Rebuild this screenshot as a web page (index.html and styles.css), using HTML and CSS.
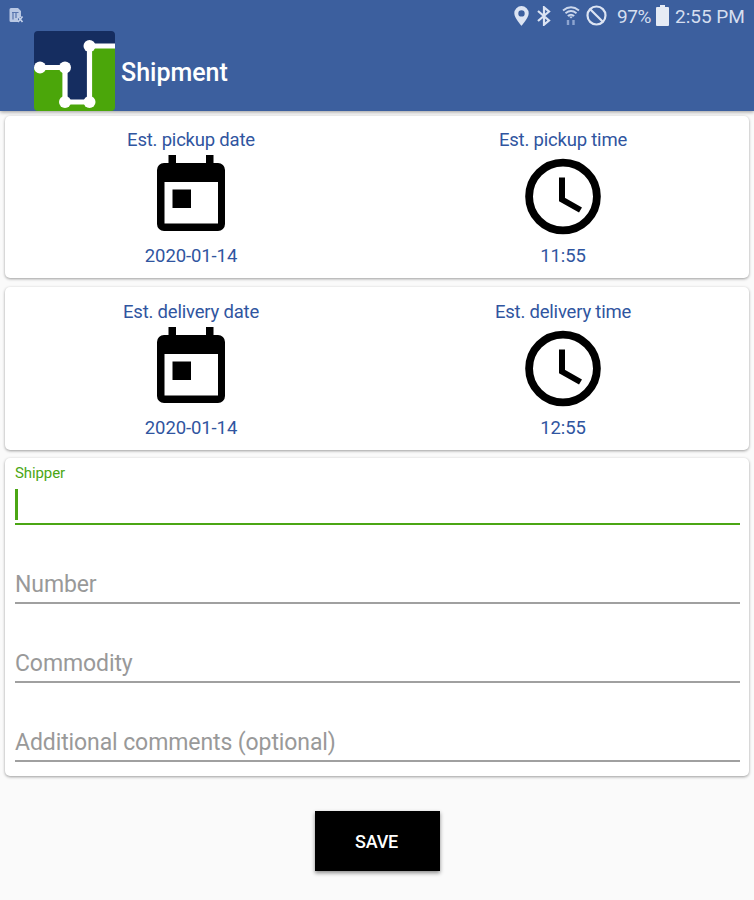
FILE: index.html
```
<!DOCTYPE html>
<html lang="en">
<head>
<meta charset="utf-8">
<title>Shipment</title>
<link rel="stylesheet" href="styles.css">
</head>
<body>
<svg class="symbols" aria-hidden="true">
  <symbol id="calendar" viewBox="0 0 68 76">
    <path fill-rule="evenodd" d="M11.500 0h7.500v8h30V0h7.500v8H61a7 7 0 0 1 7 7v54a7 7 0 0 1-7 7H7a7 7 0 0 1-7-7V15a7 7 0 0 1 7-7h4.500zM7.500 27v41.500h53.500V27zM15.500 34.500h18.500v18.500h-18.500z"/>
  </symbol>
  <symbol id="clock" viewBox="0 0 76 76">
    <circle cx="38" cy="38" r="33.900" fill="none" stroke="#000" stroke-width="7.800"/>
    <path d="M37 19v22l18.500 10.500" fill="none" stroke="#000" stroke-width="6"/>
  </symbol>
</svg>
<header class="header">
  <div class="status">
    <svg class="notice" width="15" height="15" viewBox="0 0 15 15">
      <path d="M.5 1.500q0-1.500 1.500-1.500h7l3 3v6H9v5H2q-1.500 0-1.500-1.500z" fill="#b9c8e4"/>
      <path d="M3 4.500h6.500M4 5v6.500M7 5v5" stroke="#5875ae" stroke-width="1.200"/>
      <path d="M9 8.500l4.500 5.500M13.500 8.500L9 14" stroke="#c3d0e9" stroke-width="1.700"/>
    </svg>
    <svg class="pin" width="15" height="20" viewBox="0 0 15 20"><path fill="#dce4f3" fill-rule="evenodd" d="M7.500 0A7.200 7.200 0 0 0 .3 7.300C.3 12 7.500 19.800 7.500 19.800S14.700 12 14.700 7.300A7.200 7.200 0 0 0 7.500 0zm0 4.200a3.200 3.200 0 1 1 0 6.400 3.200 3.200 0 0 1 0-6.400z"/></svg>
    <svg class="bluetooth" width="14" height="20" viewBox="0 0 14 20"><path d="M1 5l11 9.500-5 4.200V1.300l5 4.200L1 15" fill="none" stroke="#dce4f3" stroke-width="2.200"/></svg>
    <svg class="wifi" width="18" height="20" viewBox="0 0 18 20">
      <path d="M1 4.500q8-6.500 16 0M3.500 7.300q5.500-4.500 11 0M5.800 10q3.200-2.600 6.400 0" fill="none" stroke="#cbd7ed" stroke-width="1.900"/>
      <path d="M9 12.600l-2-2h4z" fill="#cbd7ed"/>
      <path d="M6 14v5M11.500 14v5" stroke="#8ea5d0" stroke-width="2.400"/>
    </svg>
    <svg class="blocked" width="21" height="21" viewBox="0 0 21 21"><circle cx="10.500" cy="10.500" r="9" fill="none" stroke="#dce4f3" stroke-width="2.200"/><path d="M4.200 4.200l12.600 12.600" stroke="#dce4f3" stroke-width="2.200"/></svg>
    <span class="percent">97%</span>
    <svg class="battery" width="13" height="21" viewBox="0 0 13 21"><path fill="#e6ebf5" d="M4 0h5v2h3q1 0 1 1v17q0 1-1 1H1q-1 0-1-1V3q0-1 1-1h3z"/></svg>
    <span class="time">2:55 PM</span>
  </div>
  <div class="title-bar">
    <svg class="logo" width="81" height="80" viewBox="0 0 81 80">
      <path fill="#152d60" d="M4 0h73q4 0 4 4v11H56v56H30V36H0V4q0-4 4-4z"/>
      <path fill="#4ba60a" d="M0 36h30v35h25V15h26v61q0 4-4 4H4q-4 0-4-4z"/>
      <path d="M6 36.500h25V71h24.500V15H81" fill="none" stroke="#fff" stroke-width="5.200"/>
      <g fill="#fff"><circle cx="6" cy="36.500" r="6"/><circle cx="31" cy="36.500" r="6"/><circle cx="31" cy="71" r="6"/><circle cx="55.500" cy="71" r="6"/><circle cx="55.500" cy="15" r="6"/></g>
    </svg>
    <h1 class="title">Shipment</h1>
  </div>
</header>
<main class="content">
  <section class="card schedule">
    <div class="slot">
      <span class="label">Est. pickup date</span>
      <svg class="icon calendar"><use href="#calendar"/></svg>
      <span class="value">2020-01-14</span>
    </div>
    <div class="slot">
      <span class="label">Est. pickup time</span>
      <svg class="icon clock"><use href="#clock"/></svg>
      <span class="value">11:55</span>
    </div>
  </section>
  <section class="card schedule delivery">
    <div class="slot">
      <span class="label">Est. delivery date</span>
      <svg class="icon calendar"><use href="#calendar"/></svg>
      <span class="value">2020-01-14</span>
    </div>
    <div class="slot">
      <span class="label">Est. delivery time</span>
      <svg class="icon clock"><use href="#clock"/></svg>
      <span class="value">12:55</span>
    </div>
  </section>
  <section class="card form">
    <div class="field active">
      <span class="float-label">Shipper</span>
      <span class="caret"></span>
    </div>
    <div class="field">Number</div>
    <div class="field">Commodity</div>
    <div class="field">Additional comments (optional)</div>
  </section>
  <button class="save" type="button">SAVE</button>
</main>
</body>
</html>
```
FILE: styles.css
```
* { box-sizing: border-box; }
body {
  margin: 0;
  height: 900px;
  overflow: hidden;
  background: #fafafa;
  font-family: Roboto, sans-serif;
}
svg { display: block; flex: none; }
.symbols { position: absolute; width: 0; height: 0; }
.header {
  height: 111px;
  background: #3c5f9e;
  box-shadow: 0 1px 4px rgba(0, 0, 0, .4);
}
.status {
  display: flex;
  align-items: center;
  height: 31px;
  padding: 0 9px;
  color: #d5deef;
  font-size: 19px;
  line-height: 31px;
  white-space: nowrap;
}
.notice { margin-right: auto; }
.bluetooth { margin-left: 8px; }
.wifi { margin-left: 11px; }
.blocked { margin-left: 6px; }
.percent { width: 35px; margin-left: 10px; padding-top: 2px; letter-spacing: -.4px; }
.battery { margin-left: 4px; }
.time { width: 70px; margin-left: 6px; padding-top: 2px; }
.title-bar { display: flex; align-items: center; height: 80px; padding-left: 34px; }
.title {
  margin: 4px 0 0 6px;
  color: #fff;
  font-size: 25px;
  font-weight: 500;
  line-height: 32px;
}
.content { display: flex; flex-direction: column; padding: 5px 5px 0; }
.card {
  background: #fff;
  border-radius: 5px;
  box-shadow: 0 1px 3px rgba(0, 0, 0, .38);
}
.schedule { display: grid; grid-template-columns: 1fr 1fr; height: 162px; margin-bottom: 9px; }
.delivery { height: 163px; margin-bottom: 8px; padding-top: 1px; }
.slot { display: flex; flex-direction: column; align-items: center; color: #3055a0; font-size: 18.500px; }
.label { height: 24px; margin-top: 12px; line-height: 24px; letter-spacing: -.2px; }
.calendar { width: 68px; height: 76px; margin-top: 3px; }
.clock { width: 76px; height: 77px; margin: 6px 0 -4px; }
.value { margin-top: 13px; line-height: 24px; letter-spacing: -.1px; }
.form { height: 318px; padding: 0 9px 0 10px; }
.field {
  display: flex;
  align-items: flex-end;
  height: 79px;
  padding-bottom: 3px;
  border-bottom: 2px solid #a0a0a0;
  color: #999;
  font-size: 23px;
  line-height: 28px;
  letter-spacing: -.1px;
}
.field.active {
  flex-direction: column;
  align-items: flex-start;
  justify-content: space-between;
  height: 67px;
  padding: 5px 0 3px;
  border-bottom: 2px solid #4ba614;
}
.float-label { color: #4ba614; font-size: 15px; line-height: 20px; }
.caret { width: 3px; height: 31px; background: #4ba614; }
.save {
  align-self: center;
  width: 125px;
  height: 60px;
  margin-top: 35px;
  padding: 1px 1px 0 0;
  border: 0;
  background: #000;
  box-shadow: 0 2px 4px rgba(0, 0, 0, .45);
  color: #fff;
  font: 500 18px/60px Roboto, sans-serif;
  letter-spacing: -.2px;
}
```
